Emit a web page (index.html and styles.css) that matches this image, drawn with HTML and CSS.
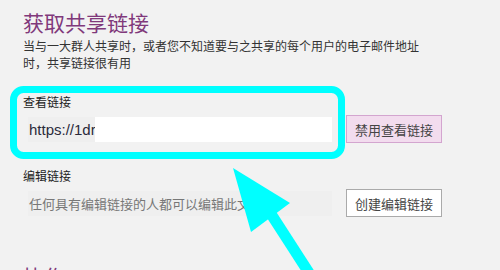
FILE: index.html
```html
<!DOCTYPE html>
<html lang="zh-CN">
<head>
    <meta charset="UTF-8">
    <title>获取共享链接</title>
    <link rel="stylesheet" href="styles.css">
</head>
<body>
    <div class="page">
        <h1 class="title">获取共享链接</h1>
        <p class="desc">当与一大群人共享时，或者您不知道要与之共享的每个用户的电子邮件地址时，共享链接很有用</p>

        <div class="field view-field">
            <div class="field-label">查看链接</div>
            <div class="field-row">
                <div class="link-box">
                    <span class="link-text">https://1drv.ms</span>
                    <span class="redact"></span>
                </div>
                <button class="btn btn-disable">禁用查看链接</button>
            </div>
        </div>

        <div class="field edit-field">
            <div class="field-label">编辑链接</div>
            <div class="field-row">
                <div class="link-box">
                    <span class="placeholder">任何具有编辑链接的人都可以编辑此文档</span>
                </div>
                <button class="btn">创建编辑链接</button>
            </div>
        </div>

        <h2 class="title next-title">协作</h2>
    </div>

    <!-- annotation layer -->
    <svg class="annot" width="500" height="270" viewBox="0 0 500 270">
        <rect x="13.5" y="89.5" width="328" height="66" rx="10" fill="none" stroke="#00ffff" stroke-width="7"/>
        <line x1="262" y1="200" x2="322" y2="293" stroke="#00ffff" stroke-width="11"/>
        <polygon points="233,168 290,203 251,232" fill="#00ffff"/>
    </svg>
</body>
</html>
```

FILE: styles.css
```css
body {
    margin: 0;
    background-color: #f2f2f2;
    font-family: "Noto Sans", "Noto Sans CJK SC", sans-serif;
    color: #333;
    overflow: hidden;
}
.page {
    padding: 8px 0 0 23px;
}
.title {
    margin: 0;
    font-family: "Noto Sans CJK SC", sans-serif;
    font-size: 21px;
    font-weight: normal;
    line-height: 28px;
    color: #80397b;
}
.desc {
    margin: 1px 0 0;
    width: 400px;
    font-family: "Noto Sans CJK SC", sans-serif;
    font-size: 12px;
    line-height: 17px;
    color: #333;
}
.field-label {
    font-family: "Noto Sans CJK SC", sans-serif;
    font-size: 12px;
    line-height: 16px;
    color: #222;
}
.view-field {
    margin-top: 23px;
}
.edit-field {
    margin-top: 25px;
}
.field-row {
    display: flex;
    align-items: center;
    gap: 14px;
    margin-top: 5px;
}
.link-box {
    display: flex;
    align-items: center;
    width: 304px;
    height: 25px;
    margin-left: 5px;
    background-color: #efefef;
    overflow: hidden;
    white-space: nowrap;
}
.link-text {
    flex: none;
    width: 66px;
    padding-left: 1px;
    overflow: hidden;
    font-family: "Liberation Sans", Arial, sans-serif;
    font-size: 15px;
    color: #2b2b3b;
}
.redact {
    flex: 1;
    align-self: stretch;
    background-color: #fff;
}
.placeholder {
    padding-left: 1px;
    font-family: "Noto Sans CJK SC", sans-serif;
    font-size: 13px;
    color: #777;
}
.btn {
    width: 96px;
    height: 28px;
    padding: 0;
    border: 1px solid #aaa;
    background-color: #fff;
    font-family: "Noto Sans CJK SC", sans-serif;
    font-size: 13px;
    color: #444;
}
.btn-disable {
    background-color: #f2dcee;
    border-color: #d3a5cf;
}
.next-title {
    margin-top: 45px;
}
.annot {
    position: absolute;
    left: 0;
    top: 0;
}
```
